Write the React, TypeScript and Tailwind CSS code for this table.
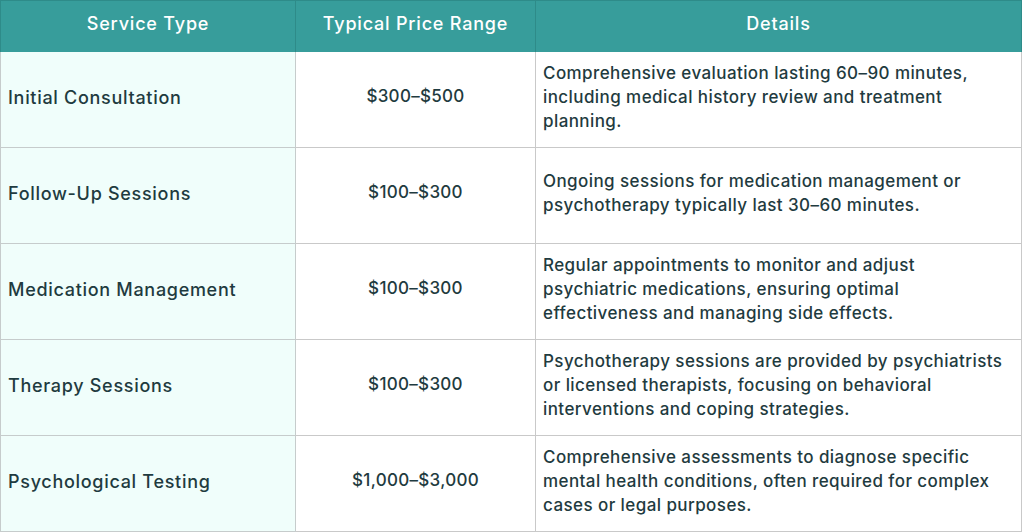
const rows = [
  {
    service: "Initial Consultation",
    price: "$300–$500",
    details:
      "Comprehensive evaluation lasting 60–90 minutes, including medical history review and treatment planning.",
  },
  {
    service: "Follow-Up Sessions",
    price: "$100–$300",
    details:
      "Ongoing sessions for medication management or psychotherapy typically last 30–60 minutes.",
  },
  {
    service: "Medication Management",
    price: "$100–$300",
    details:
      "Regular appointments to monitor and adjust psychiatric medications, ensuring optimal effectiveness and managing side effects.",
  },
  {
    service: "Therapy Sessions",
    price: "$100–$300",
    details:
      "Psychotherapy sessions are provided by psychiatrists or licensed therapists, focusing on behavioral interventions and coping strategies.",
  },
  {
    service: "Psychological Testing",
    price: "$1,000–$3,000",
    details:
      "Comprehensive assessments to diagnose specific mental health conditions, often required for complex cases or legal purposes.",
  },
];

const App = () => {
  return (
    <div className="w-[1022px] h-[532px] bg-white font-['Inter',sans-serif] text-[#1f3b40]">
      <table className="w-full border-separate border-spacing-0 table-fixed">
        <colgroup>
          <col className="w-[296px]" />
          <col className="w-[240px]" />
          <col />
        </colgroup>
        <thead>
          <tr className="h-[52px] bg-[#379d9b] text-white text-[18px] tracking-[0.8px]">
            <th className="border-l border-r border-t border-[#2e8b89] font-medium pb-[7px]">Service Type</th>
            <th className="border-r border-t border-[#2e8b89] font-medium pb-[7px]">Typical Price Range</th>
            <th className="border-r border-t border-[#2e8b89] font-medium pb-[7px]">Details</th>
          </tr>
        </thead>
        <tbody>
          {rows.map((row) => (
            <tr key={row.service} className="h-[96px] font-medium">
              <td className="border-l border-r border-b border-[#c6cccc] bg-[#f0fefb] px-[7px] pb-[5px] text-[18px] tracking-[0.7px]">
                {row.service}
              </td>
              <td className="border-r border-b border-[#c9c9c9] text-center pb-[5px] text-[17px] tracking-[0.3px]">
                {row.price}
              </td>
              <td className="border-r border-b border-[#c9c9c9] pl-[7px] pr-[14px] pb-[5px] text-[17px] tracking-[0.42px] leading-6">
                {row.details}
              </td>
            </tr>
          ))}
        </tbody>
      </table>
    </div>
  );
};

export default App;
